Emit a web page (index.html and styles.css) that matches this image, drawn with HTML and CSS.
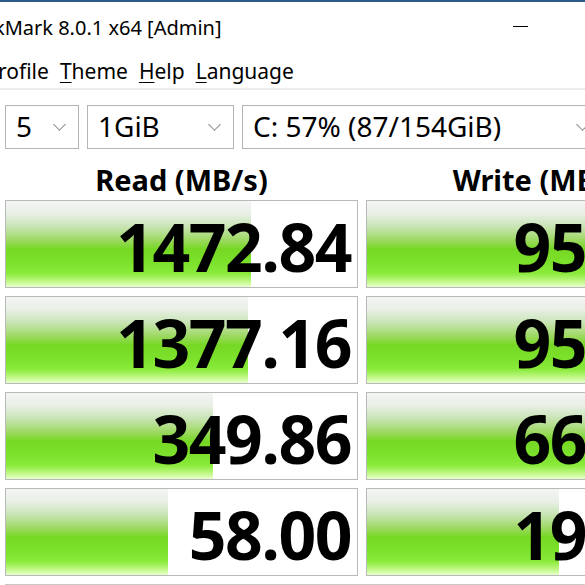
FILE: index.html
```html
<!DOCTYPE html>
<html lang="en">
<head>
  <meta charset="UTF-8">
  <title>CrystalDiskMark 8.0.1 x64 [Admin]</title>
  <link rel="stylesheet" href="styles.css">
</head>
<body>
  <div class="window">
    <div class="titlebar">
      <span class="title">kMark 8.0.1 x64 [Admin]</span>
      <span class="minimize"></span>
    </div>

    <div class="menubar">
      <span class="menu first">rofile</span>
      <span class="menu"><u>T</u>heme</span>
      <span class="menu"><u>H</u>elp</span>
      <span class="menu"><u>L</u>anguage</span>
    </div>

    <div class="main">
      <div class="controls">
        <div class="combo combo-count"><span>5</span><span class="chev"></span></div>
        <div class="combo combo-size"><span>1GiB</span><span class="chev"></span></div>
        <div class="combo combo-drive"><span>C: 57% (87/154GiB)</span><span class="chev"></span></div>
      </div>

      <div class="results">
        <div class="head">Read (MB/s)</div>
        <div class="head">Write (MB/s)</div>

        <div class="cell"><div class="bar" style="width: 245px"></div><span class="value">1472.84</span></div>
        <div class="cell"><div class="bar" style="width: 330px"></div><span class="value">956.21</span></div>

        <div class="cell"><div class="bar" style="width: 242px"></div><span class="value">1377.16</span></div>
        <div class="cell"><div class="bar" style="width: 330px"></div><span class="value">951.58</span></div>

        <div class="cell"><div class="bar" style="width: 207px"></div><span class="value">349.86</span></div>
        <div class="cell"><div class="bar" style="width: 290px"></div><span class="value">662.47</span></div>

        <div class="cell"><div class="bar" style="width: 162px"></div><span class="value">58.00</span></div>
        <div class="cell"><div class="bar" style="width: 192px"></div><span class="value">193.05</span></div>
      </div>

      <div class="comment"></div>
    </div>
  </div>
</body>
</html>
```

FILE: styles.css
```css
html, body {
  margin: 0;
  padding: 0;
  background: #fff;
  overflow: hidden;
}
body {
  font-family: "Noto Sans", "Open Sans", sans-serif;
  color: #000;
}
.window {
  width: 740px;
  border-top: 2px solid #2d5b87;
}
.titlebar {
  height: 50px;
  display: flex;
  align-items: center;
  position: relative;
}
.title {
  font-size: 20px;
  margin-left: -6px;
  white-space: nowrap;
}
.minimize {
  position: absolute;
  left: 513px;
  top: 24px;
  width: 15px;
  height: 1px;
  background: #000;
}
.menubar {
  height: 36px;
  display: flex;
  align-items: center;
  gap: 11px;
  font-size: 21px;
  border-bottom: 2px solid #ececec;
}
.menu {
  margin-top: 2px;
}
.menu u {
  text-decoration-thickness: 1px;
  text-underline-offset: 3px;
}
.menu.first {
  margin-left: -2px;
}
.main {
  padding: 15px 0 0 5px;
}
.controls {
  display: flex;
  gap: 8px;
  height: 44px;
}
.combo {
  box-sizing: border-box;
  height: 44px;
  border: 1px solid #b4b4b4;
  display: flex;
  align-items: center;
  justify-content: space-between;
  padding: 0 14px 0 10px;
  font-size: 28px;
}
.combo span:first-child {
  margin-top: -3px;
}
.combo-count { width: 74px; }
.combo-size { width: 147px; }
.combo-drive { width: 360px; }
.chev {
  width: 8px;
  height: 8px;
  border-right: 1px solid #8a8a8a;
  border-bottom: 1px solid #8a8a8a;
  transform: rotate(45deg);
  margin-top: -6px;
}
.results {
  display: grid;
  grid-template-columns: 353px 353px;
  grid-template-rows: 43px repeat(4, 88px);
  column-gap: 8px;
  row-gap: 8px;
}
.head {
  font-weight: 700;
  font-size: 29px;
  text-align: center;
  align-self: end;
  line-height: 1;
  margin-bottom: -2px;
}
.cell {
  box-sizing: border-box;
  border: 1px solid #b9b9b9;
  position: relative;
  overflow: hidden;
  display: flex;
  align-items: center;
  justify-content: flex-end;
  padding-right: 6px;
}
.bar {
  position: absolute;
  left: 0;
  top: 0;
  bottom: 0;
  background: linear-gradient(to bottom,
    #f3f5f3 0%,
    #e9f0e7 14%,
    #c8e4b4 30%,
    #9ed964 45%,
    #76d824 56%,
    #7ce22c 72%,
    #8aea3a 84%,
    #c3f98a 94%,
    #e7ffd0 100%);
}
.value {
  position: relative;
  font-family: "Open Sans", "Noto Sans", sans-serif;
  font-weight: 700;
  font-size: 66px;
  letter-spacing: -1.5px;
  line-height: 1;
  margin-top: 3px;
}
.comment {
  margin-top: 8px;
  height: 20px;
  border-top: 2px solid #c8c8c8;
}
```
